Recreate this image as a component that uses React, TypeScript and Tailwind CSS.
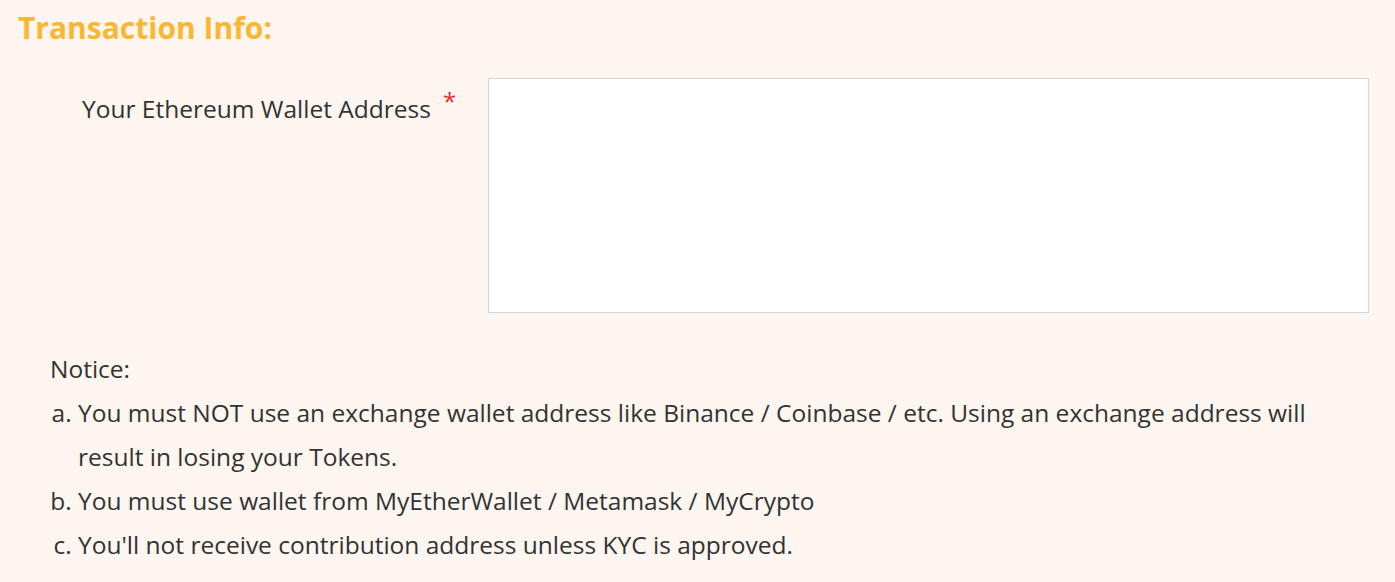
import React from "react";

const notices = [
  "You must NOT use an exchange wallet address like Binance / Coinbase / etc. Using an exchange address will result in losing your Tokens.",
  "You must use wallet from MyEtherWallet / Metamask / MyCrypto",
  "You'll not receive contribution address unless KYC is approved.",
];

export default function App() {
  return (
    <div
      className="min-h-[582px] w-full bg-[#fdf5f0] text-[#333333]"
      style={{ fontFamily: '"Open Sans", sans-serif' }}
    >
      <h2 className="px-[18px] pt-[10px] text-[30px] font-bold leading-[36px] text-[#f9b733]">
        Transaction Info:
      </h2>

      {/* wallet address row */}
      <div className="mt-[32px] flex pr-[26px]">
        <label className="w-[488px] shrink-0 pl-[82px] pt-[16px] text-[24.5px] leading-[30px]">
          Your Ethereum Wallet Address
          <span className="relative -top-[8px] ml-[12px] text-[24px] text-[#e32b2b]">*</span>
        </label>
        <textarea className="h-[235px] flex-1 resize-none border border-[#d3d3d3] bg-white outline-none" />
      </div>

      <div className="mt-[34px] pl-[50px] text-[24.5px] leading-[44px]">
        <p>Notice:</p>
        <ol className="list-[lower-alpha] pl-[28px] pr-[60px]">
          {notices.map((n) => (
            <li key={n}>{n}</li>
          ))}
        </ol>
      </div>
    </div>
  );
}
